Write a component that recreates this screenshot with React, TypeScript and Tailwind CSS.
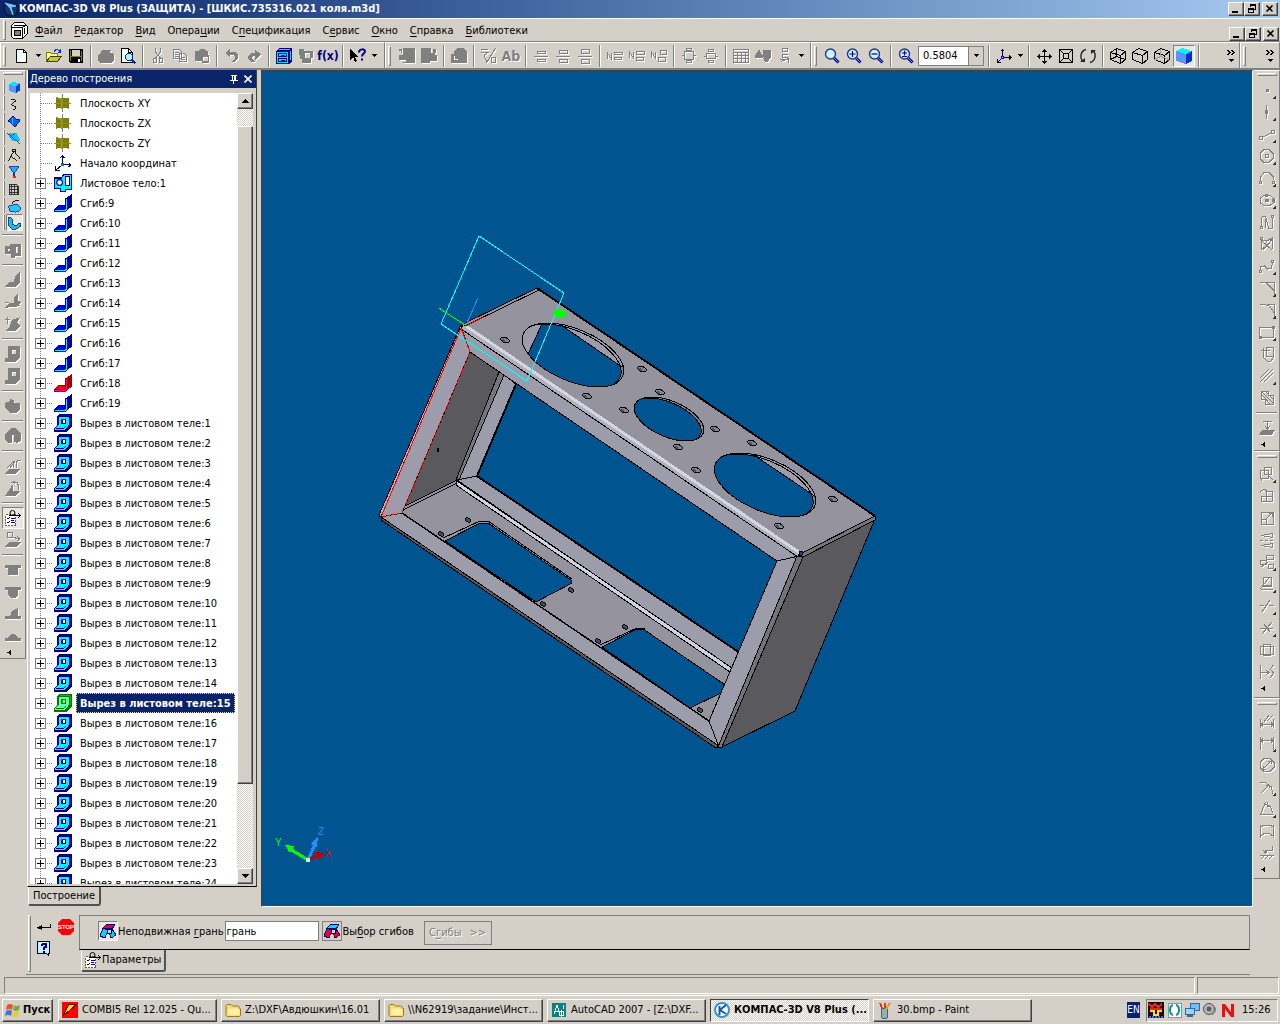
import React, { useState } from 'react';

const RAISED =
  'border border-t-white border-l-white border-r-[#404040] border-b-[#404040] shadow-[inset_-1px_-1px_#808080] bg-[#d4d0c8]';
const CHECKER = 'bg-[repeating-conic-gradient(#ffffff_0_25%,#d4d0c8_0_50%)] bg-[length:2px_2px]';

interface Shape {
  s?: string; // stroked outline
  f?: string; // filled area
}

interface Tool {
  label: string;
  shape?: Shape;
  art?: React.ReactNode;
  more?: boolean;
  pressed?: boolean;
}

type BarItem = Tool | '|' | 'v';

/* ---------- SMALL PARTS ---------- */

// "&" stands before the accelerator letter
function Accel({ text }: { text: string }) {
  const at = text.indexOf('&');
  if (at < 0) return <>{text}</>;
  return (
    <>
      {text.slice(0, at)}
      <span className="underline underline-offset-2">{text[at + 1]}</span>
      {text.slice(at + 2)}
    </>
  );
}

function Glyph({ children, size = 'size-4' }: { children: React.ReactNode; size?: string }) {
  return (
    <svg viewBox="0 0 16 16" className={`${size} shrink-0 overflow-visible`} shapeRendering="crispEdges" fill="none" aria-hidden="true">
      {children}
    </svg>
  );
}

function Etched({ shape, more }: { shape: Shape; more?: boolean }) {
  return (
    <Glyph>
      <g transform="translate(1 1)">
        {shape.f && <path d={shape.f} fill="#fff" />}
        {shape.s && <path d={shape.s} stroke="#fff" />}
      </g>
      {shape.f && <path d={shape.f} fill="#808080" fillRule="evenodd" />}
      {shape.s && <path d={shape.s} stroke="#808080" />}
      {more && <path d="M17 13v4h-4z" fill="#303030" />}
    </Glyph>
  );
}

function ToolButton({ tool }: { tool: Tool }) {
  return (
    <button
      aria-label={tool.label}
      title={tool.label}
      className={`size-[22px] shrink-0 flex items-center justify-center ${
        tool.pressed ? 'border border-t-[#808080] border-l-[#808080] border-r-white border-b-white bg-[#e9e7e3]' : ''
      }`}
    >
      {tool.art ?? <Etched shape={tool.shape!} more={tool.more} />}
    </button>
  );
}

const DownArrow = () => (
  <svg viewBox="0 0 5 3" className="w-[5px] h-[3px]" shapeRendering="crispEdges" aria-hidden="true">
    <path d="M0 0h5v1h-1v1h-1v1h-1v-1h-1v-1h-1z" fill="#000" />
  </svg>
);

const SideArrow = () => (
  <svg viewBox="0 0 4 5" className="w-1 h-[5px]" shapeRendering="crispEdges" aria-hidden="true">
    <path d="M4 0v5l-4-2.500z" fill="#000" />
  </svg>
);

function VSep() {
  return (
    <span className="w-2 shrink-0 flex justify-center">
      <span className="w-[2px] h-[22px] bg-[#808080] border-r border-white" />
    </span>
  );
}

function HSep() {
  return (
    <span className="h-2 shrink-0 flex items-center self-stretch px-[2px]">
      <span className="h-[2px] w-full bg-[#808080] border-b border-white" />
    </span>
  );
}

const VGrip = () => <span className="w-[3px] h-5 shrink-0 border border-l-white border-t-white border-r-[#808080] border-b-[#808080]" />;
const HGrip = () => <span className="w-5 h-[3px] shrink-0 border border-l-white border-t-white border-r-[#808080] border-b-[#808080]" />;

function Bar({ items }: { items: BarItem[] }) {
  return (
    <>
      {items.map((item, i) => {
        if (item === '|') return <VSep key={i} />;
        if (item === 'v')
          return (
            <button key={i} aria-label="Ещё" className="w-[10px] h-[22px] flex items-center justify-center shrink-0">
              <DownArrow />
            </button>
          );
        return <ToolButton key={i} tool={item} />;
      })}
    </>
  );
}

function Column({ items }: { items: BarItem[] }) {
  return (
    <>
      {items.map((item, i) => {
        if (item === '|') return <HSep key={i} />;
        if (item === 'v')
          return (
            <button key={i} aria-label="Ещё" className="h-[11px] w-[22px] pr-2 flex items-center justify-center shrink-0">
              <SideArrow />
            </button>
          );
        return <ToolButton key={i} tool={item} />;
      })}
    </>
  );
}

/* ---------- COLOUR ICONS ---------- */

function Lens({ sign }: { sign?: string }) {
  return (
    <svg viewBox="0 0 16 16" className="size-4" aria-hidden="true">
      <path d="M10 10l4.500 4.500" stroke="#000080" strokeWidth="3" />
      <path d="M10 10l4 4" stroke="#6699ff" />
      <circle cx="6.500" cy="6" r="5" fill="#c8f4ff" stroke="#26338c" strokeWidth="1.400" />
      {sign && <path d={sign} stroke="#000080" strokeWidth="1.200" fill="none" />}
    </svg>
  );
}

const Sheet = (
  <Glyph>
    <path d="M2.500 1.500h7l3 3v10h-10z" fill="#fff" stroke="#000" />
    <path d="M3 2h4v9h-4z" fill="#e0ffff" />
    <path d="M9.500 1.500v3h3" stroke="#000" />
  </Glyph>
);

const OpenFolder = (
  <Glyph>
    <path d="M.5 13.500v-9h4l1 1h6v3" fill="#ffff99" stroke="#808000" />
    <path d="M.5 13.500l4-5.500h11l-4 5.500z" fill="#c8c832" stroke="#404000" />
    <path d="M8 3.500c2-3 4-2 6 0M14.500 1v3h-3" stroke="#0033cc" />
  </Glyph>
);

const Floppy = (
  <Glyph>
    <path d="M1 1h14v14h-13l-1-1z" fill="#000" />
    <path d="M2 2h1v11h-1zM13 3h1v10h-1z" fill="#808000" />
    <path d="M4 2h8v6h-8z" fill="#d4d0c8" />
    <path d="M3 8h10v1h-10z" fill="#808000" />
    <path d="M10 11h2v3h-2z" fill="#fff" />
  </Glyph>
);

const Preview = (
  <Glyph>
    <path d="M1.500.5h7l4 4v10h-11z" fill="#fff" stroke="#000" />
    <path d="M8.500.5v4h4" stroke="#000" />
    <circle cx="9" cy="9" r="3.500" fill="#b0f0ff" stroke="#003399" />
    <path d="M11.500 11.500l4 4" stroke="#003399" strokeWidth="2" />
  </Glyph>
);

const Cabinet = (
  <Glyph>
    <path d="M0 3l3-3h13v13l-3 3h-13z" fill="#000080" />
    <path d="M1 4h11v11h-11z" fill="#00e5ff" />
    <path d="M2.500 5.500h8v3h-8zM2.500 10.500h8v3h-8zM5 7h4M5 12h4" stroke="#000080" />
    <path d="M3 2l1-1h10M14 3v9" stroke="#00e5ff" />
  </Glyph>
);

const HelpArrow = (
  <Glyph>
    <path d="M0 1v11l3-3 2 5 2-1-2-4h4z" fill="#000" />
    <path d="M9 4.500c0-4 6-4 6-1 0 2-3 2-3 5M12 10.500v2" stroke="#000080" strokeWidth="2" shapeRendering="auto" />
  </Glyph>
);

const Cube = ({ back }: { back?: string }) => (
  <Glyph>
    <path d="M.5 4.500l6-4 9 3v8l-5 4-10-4z" stroke="#000" />
    <path d="M.5 4.500l10 3 5-4M10.500 7.500v8" stroke="#000" />
    {back && <path d="M6.500.5v8l-6 3M6.500 8.500l9 3" stroke={back} />}
  </Glyph>
);

const SolidCube = (
  <Glyph>
    <path d="M0 3l6-3 10 3-6 3z" fill="#00f4ff" />
    <path d="M0 3l10 3v10l-10-3z" fill="#5c93ff" />
    <path d="M10 6l6-3v10l-6 3z" fill="#0033cc" />
  </Glyph>
);

const Move = (
  <Glyph>
    <path d="M8.500 1v15M1 8.500h15M6 3.500h5M6 13.500h5M3.500 6v5M13.500 6v5" stroke="#000" />
    <path d="M7 2h3v1h-3zM7 14h3v1h-3zM2 7h1v3h-1zM14 7h1v3h-1z" fill="#000" />
  </Glyph>
);

const Fit = (
  <Glyph>
    <path d="M1.500 1.500h13v13h-13zM5.500 5.500h5v5h-5zM2 2l3 3M14 2l-3 3M2 14l3-3M14 14l-3-3" stroke="#000" />
  </Glyph>
);

const Rotate = (
  <svg viewBox="0 0 16 16" className="size-4 overflow-visible" fill="none" aria-hidden="true">
    <path d="M6 1.500c-5 1-7 8-3 12M10 14.500c5-1 7-8 3-12" stroke="#222" strokeWidth="1.400" />
    <path d="M0 14h5v-4zM16 2h-5v4z" fill="#222" />
  </svg>
);

const Axes = (
  <Glyph>
    <path d="M6.500 9v-8M4.500 3.500l2-2 2 2M7 9.500h8M13 7.500l2 2-2 2M6 10l-4 4M1.500 11v3.500h3" stroke="#000" />
    <path d="M5.500 8.500h2v2h-2z" fill="#fff" stroke="#0000ff" />
  </Glyph>
);

const ParamIcon = ({ size }: { size?: string }) => (
  <Glyph size={size}>
    <path d="M.5 4.500h10v11h-10z" fill="#fff" stroke="#606060" strokeDasharray="2 1" />
    <circle cx="7.500" cy="3" r="2.500" stroke="#000" shapeRendering="auto" />
    <path d="M4 5.500h12M13 3l2.500 2.500-2.500 2.500" stroke="#000" />
    <path d="M2 8l1 1 2-2M2 12l1 1 2-2" stroke="#000" />
    <path d="M6 8.500h4M6 10.500h3M6 12.500h4" stroke="#0000a0" />
  </Glyph>
);

const PlaneIcon = (
  <Glyph size="size-[18px]">
    <path d="M2 3l5 1v-1l6 1v9l-5-1-6 1z" fill="#808000" />
    <path d="M7.500 0v16M0 8.500h15" stroke="#808080" />
    <path d="M2 3l5 2v8" stroke="#a0a000" />
  </Glyph>
);

const OriginIcon = (
  <Glyph size="size-[18px]">
    <path d="M7.500 9v-8M5.500 3.500l2-2 2 2M8 9.500h7M13 7.500l2 2-2 2M7 10l-5 4M1.500 11v3.500h3.500" stroke="#000080" />
    <path d="M6 8h3v3h-3z" fill="#008080" />
  </Glyph>
);

const SheetBodyIcon = (
  <Glyph size="size-[18px]">
    <path d="M.5 3.500h6l2-3h7v13h-5v2h-5v-3h-5z" fill="#00f4ff" stroke="#000080" />
    <path d="M10.500 2.500h3v8h-3z" fill="#fff" stroke="#000080" />
    <circle cx="5" cy="7.500" r="2.500" fill="#fff" stroke="#000080" shapeRendering="auto" />
  </Glyph>
);

function BendIcon({ red }: { red?: boolean }) {
  return (
    <Glyph size="size-[18px]">
      <path d="M10 4l6-4v11l-6 5h-10v-2l4-4h6z" fill={red ? '#a00000' : '#000090'} />
      <path d="M4 11h6v2h-8z" fill={red ? '#ff0000' : '#0000ff'} />
      <path d="M1 14.500h9l1-1v-9" stroke={red ? '#ff00a0' : '#00f4ff'} />
    </Glyph>
  );
}

function CutIcon({ green }: { green?: boolean }) {
  const dark = green ? '#007800' : '#000080';
  return (
    <Glyph size="size-[18px]">
      <path d="M3 2l2-2h11v11l-5 5h-11v-3l3-3z" fill={dark} />
      <path d="M4 3h9v7l-3 4h-9v-1l3-3z" fill={green ? '#5cffb0' : '#00f4ff'} />
      <path d="M5 1.500h9M14.500 2v8" stroke={green ? '#00c000' : '#0000d0'} />
      <path d="M2 12.500h7l2-2" stroke={dark} />
      <path d="M6.500 4.500h4v4h-4z" fill={green ? '#a0ff60' : '#fff'} stroke={dark} />
      <path d="M6 5h2v4h-2z" fill={green ? '#00a000' : '#0000a0'} />
    </Glyph>
  );
}

function FaceIcon({ a, b }: { a: string; b: string }) {
  return (
    <Glyph>
      <path d="M3 5l4-4 8 1-3 4z" fill={a} stroke="#000080" />
      <path d="M3 5l-3 8 5 2 3-8z" fill={b} stroke="#000080" />
      <path d="M12 6l4 6-5 3-3-8z" fill={b} stroke="#000080" />
      <path d="M7 6h4v4h-4z" fill="#d4d0c8" stroke="#000080" />
    </Glyph>
  );
}

/* ---------- TOOLBAR DATA ---------- */

const STANDARD: BarItem[] = [
  { label: 'Создать', art: Sheet },
  'v',
  { label: 'Открыть', art: OpenFolder },
  { label: 'Сохранить', art: Floppy },
  '|',
  { label: 'Печать', shape: { f: 'M4 2h9l-1 3h3l1 2v5l-3 3h-11l-2-3v-5l3-2z' } },
  { label: 'Просмотр', art: Preview },
  '|',
  { label: 'Вырезать', shape: { s: 'M5.500 0v4l5 6M10.500 0v4l-5 6M3.500 10.500h3v4h-3zM9.500 10.500h3v4h-3z' } },
  { label: 'Копировать', shape: { s: 'M1.500 1.500h6l2 2v7h-8zM3 4.500h4M3 6.500h4M3 8.500h4M7.500 5.500h5l2 2v6h-7zM9 9.500h4M9 11.500h4' } },
  { label: 'Вставить', shape: { f: 'M1 3h3l2-2h4l2 2h2v4h1v8h-7v-2h-7zM9 9v4h5v-4z' } },
  '|',
  { label: 'Отменить', shape: { f: 'M6 1v3h5l3 3v4l-4 3h-3l4-3v-2l-2-2h-3v3l-5-5z' } },
  { label: 'Повторить', shape: { f: 'M9 2v3h-4l-3 3v3l3 3h4l-3-3v-2l1-1h2v4l6-6z' } },
  '|',
  { label: 'Менеджер библиотек', art: Cabinet },
  { label: 'Переменные', shape: { f: 'M1 1h5v2h9v7h-2v5h-9v-4h-2v-4h-1zM7 5v5h5v-5z' } },
  { label: 'Функции', art: <span className="text-[12px] font-bold text-[#000080]">f(x)</span> },
  '|',
  { label: 'Справка', art: HelpArrow },
  'v',
];

const LAYOUT: BarItem[] = [
  { label: 'Лист назад', shape: { f: 'M4 0h12v15h-12v-1h3v-2h-7v-5h4zM0 1h3v4h-1v-2h-2z' } },
  { label: 'Лист вперёд', shape: { f: 'M0 0h10v5h4v2h2v6h-7v2h-9zM12 1h3v4h-3z' } },
  '|',
  { label: 'Документ', shape: { f: 'M3 3l3-3h6l4 4v11h-16v-9h3zM3 8v4h4v-1h-3v-3z' } },
  '|',
  { label: 'Шероховатость', shape: { s: 'M0 1.500h7M0 4.500h7l-4 3M14.500 0l-9 15M3 8l3 6M10.500 9.500h4v5h-4z' } },
  { label: 'Текст', art: <span className="text-[14px] font-bold text-[#808080] [text-shadow:1px_1px_#fff]">Ab</span> },
  '|',
  { label: 'По центру', shape: { s: 'M4.500 3.500h8v2h-8zM1 8.500h14M4.500 11.500h8v2h-8z' } },
  { label: 'Интервал', shape: { s: 'M4.500 2.500h8v3h-8zM1 8.500h14M4.500 11.500h8v3h-8z' } },
  { label: 'Разрядка', shape: { s: 'M4.500 1.500h8v4h-8zM1 8.500h14M4.500 11.500h8v4h-8z' } },
  '|',
  { label: 'Номер 1', shape: { s: 'M.5 11v-6l4 6v-6M7.500 4.500h8v2h-8zM7.500 9.500h7v2h-7z' } },
  { label: 'Номер 2', shape: { s: 'M.5 10v-6l4 6v-6M7.500 3.500h8v3h-8zM7.500 9.500h7v3h-7z' } },
  { label: 'Номер 3', shape: { s: 'M.5 10v-6l4 6v-6M9.500 2.500h6v4h-6zM7.500 9.500h7v4h-7z' } },
  '|',
  { label: 'Строка выше', shape: { s: 'M5.500.5h5v2h-5zM3.500 3.500h9v8h-9zM1 7.500h2M13 7.500h2M5.500 12.500h5v2h-5z' } },
  { label: 'Строка ниже', shape: { s: 'M5.500 1.500h5v2h-5zM3.500 5.500h9v5h-9zM1 8.500h2M13 8.500h2M5.500 12.500h5v2h-5z' } },
  '|',
  { label: 'Таблица', shape: { s: 'M.5 1.500h15v13h-15zM0 4.500h16M0 7.500h16M0 10.500h16M4.500 4v11M8.500 4v11M12.500 4v11' } },
  { label: 'Фигуры', shape: { f: 'M4 1l5 9h-9v-2zM8 2h8v7l-3 5h-3l-2-4z' } },
  { label: 'Надпись', shape: { s: 'M5.500.5h5v3h-5zM5 6.500h6M5.500 6v3h5M4 13.500l7-3v4M3 11.500h8' } },
  'v',
];

const VIEW_A: BarItem[] = [
  { label: 'Увеличить рамкой', art: <Lens /> },
  { label: 'Увеличить', art: <Lens sign="M3.500 6h6M6.500 3v6" /> },
  { label: 'Уменьшить', art: <Lens sign="M3.500 6h6" /> },
  '|',
  { label: 'Масштаб', art: <Lens sign="M4 5h5M6.500 2.500v5M4 8.500h5" /> },
];

const VIEW_B: BarItem[] = [
  '|',
  { label: 'Ориентация', art: Axes },
  'v',
  '|',
  { label: 'Сдвинуть', art: Move },
  { label: 'Показать всё', art: Fit },
  { label: 'Повернуть', art: Rotate },
  '|',
  { label: 'Каркас', art: <Cube back="#000" /> },
  { label: 'Без невидимых линий', art: <Cube /> },
  { label: 'Невидимые линии тонкие', art: <Cube back="#a0a0a0" /> },
  { label: 'Полутоновое', art: SolidCube, pressed: true },
  '|',
];

const PANELS: { label: string; art: React.ReactNode }[] = [
  { label: 'Редактирование детали', art: <g><path d="M2 5l5-3 8 2-4 3z" fill="#00e5ff" /><path d="M2 5l8 2v8l-8-3z" fill="#5c93ff" /><path d="M10 7l5-3v8l-5 3z" fill="#0044dd" /></g> },
  { label: 'Пространственные кривые', art: <path d="M4 2.500h4l2 2-5 4 5 3v2l-3 1" stroke="#000" /> },
  { label: 'Поверхности', art: <g><path d="M1 8l6-6 3 4 5 1-6 8-3-4z" fill="#0066ee" stroke="#000080" /><path d="M6 4v7" stroke="#40d0ff" /></g> },
  { label: 'Вспомогательная геометрия', art: <g><path d="M1 3l10-1 4 9-9 1z" fill="#00c8ff" /><path d="M0 2l15 13M3 8l6-5" stroke="#003399" /></g> },
  { label: 'Измерения', art: <path d="M8 3.500l-6.500 11M8 3.500l7 9M5 9.500l6 5M6.500 1.500h3v3h-3z" stroke="#000" /> },
  { label: 'Фильтры', art: <g><path d="M2 2h12l-5 6v4h-2v-4z" fill="#22aaff" stroke="#0033aa" /><path d="M7 12h3v3h-3z" fill="#e03010" /></g> },
  { label: 'Спецификация', art: <path d="M2.500 2.500h8l3 3v9h-11zM2 5.500h11M2 8.500h12M2 11.500h12M5.500 2v12M8.500 2v12M11.500 4v10" stroke="#222" /> },
  { label: 'Отчёты', art: <g><path d="M2 8l9-2 4 3v4l-5 2-7-1z" fill="#22c8ff" stroke="#003399" /><path d="M6 6c0-4 4-4 8-4" stroke="#000" /></g> },
  { label: 'Листовое тело', art: <path d="M2 1l4 2v6l4 2 5-3v4l-5 3h-4l-4-4z" fill="#22b8e8" stroke="#003366" /> },
];

const LEFT_TOOLS: BarItem[] = [
  '|',
  { label: 'Листовое тело', shape: { f: 'M0 4h5v-2h11v12h-6v2h-4v-4h-6zM11 5v6h2v-6zM3 7v2h2v-2z' } },
  '|',
  { label: 'Сгиб', shape: { f: 'M10 4l5-4v10l-5 5h-10l4-5h5z' } },
  { label: 'Сгиб по линии', shape: { f: 'M9 3l4-3v7l3 1-5 5h-5l-6 1 4-5h5z', s: 'M0 8l15 4' } },
  { label: 'Подсечка', shape: { f: 'M7 4l8-3-3 6 3 3-4 5h-11l5-5z', s: 'M2.500 1v7M0 3.500h5' } },
  '|',
  { label: 'Отверстие', shape: { f: 'M3 0h12v11l-4 5h-11v-4h3zM7 4v4h4v-4z' } },
  { label: 'Вырез', shape: { f: 'M3 0h12v11l-4 5h-11v-4h3zM7 4v4h4v-4z' } },
  '|',
  { label: 'Замыкание углов', shape: { f: 'M5 1l4 1v3h6v6l-4 4h-6l-5-5v-5l5-2z' } },
  '|',
  { label: 'Развёртка', shape: { f: 'M6 0h4l6 6v7l-4 2-3-1v-7h-2v8h-4l-3-3v-6z' } },
  '|',
  { label: 'Разогнуть', shape: { f: 'M4 11h11l-4 5h-11z', s: 'M2 10l7-7M5 10l5-7M8.500 10v-7M11.500 10v-6l2-2h2' } },
  { label: 'Согнуть', shape: { f: 'M8 4v7h7l-4 5h-11z', s: 'M6 2.500h6l1 2v5M10 1l-2 1 2 2' } },
  '|',
  { label: 'Параметры', art: <ParamIcon />, pressed: true },
  { label: 'Параметры сгиба', shape: { f: 'M4 10h12l-4 5h-12z', s: 'M2.500.5h5v5h-5zM6 5l9 2M12 4l3 3-3 2' } },
  '|',
  { label: 'Закрытая штамповка', shape: { f: 'M0 3h16v3h-3v7h-10v-7h-3z' } },
  { label: 'Открытая штамповка', shape: { f: 'M0 3h16v3h-3v5l-3 3h-4l-3-3v-5h-3z' } },
  { label: 'Жалюзи', shape: { f: 'M0 10h5l2-5 6-3v8h3v3h-16z' } },
  { label: 'Буртик', shape: { f: 'M0 10h2l5-4h2l5 4h2v3h-16z' } },
  'v',
];

const GEOMETRY: BarItem[] = [
  { label: 'Точка', shape: { f: 'M7 7h3v3h-3z' }, more: true },
  { label: 'Вспомогательная прямая', shape: { s: 'M7.500 1v14M6.500 6.500h2v3h-2z' }, more: true },
  { label: 'Отрезок', shape: { s: 'M.5 10.500h3v3h-3zM4 11l8-4M12.500 4.500h3v3h-3z' }, more: true },
  { label: 'Окружность', shape: { s: 'M5 1.500h5l4 4v5l-4 4h-5l-4-4v-5zM6.500 6.500h3v3h-3z' }, more: true },
  { label: 'Дуга', shape: { s: 'M1.500 12v-5l4-5h4l5 5v3M.5 11.500h2v2h-2zM13.500 11.500h2v2h-2z' }, more: true },
  { label: 'Эллипс', shape: { s: 'M5 3.500h6l4 3v4l-4 3h-6l-4-3v-4z', f: 'M6 7h4v3h-4zM6 2h3v3h-3zM13 7h3v3h-3z' }, more: true },
  { label: 'Непрерывный ввод', shape: { s: 'M2.500 3v9M2.500 2h4l3 12h4v-11M1.500 12.500h2v2h-2zM6.500 5v9M12.500 1.500h2v2h-2z' } },
  { label: 'Линия', shape: { s: 'M2.500 4v9l6-3 5-8-6 3zM3 5l10 9M13.500 3v10M1.500 1.500h2v2h-2zM4 14l9-10' } },
  { label: 'Кривая Безье', shape: { s: 'M1.500 13v-4l4-1 3 3 4-1 1-6M.5 12.500h2v2h-2zM12.500 2.500h2v2h-2z' }, more: true },
  { label: 'Фаска', shape: { s: 'M1 2.500h6l8 8v5M8 2.500h7v7' }, more: true },
  { label: 'Скругление', shape: { s: 'M1 2.500h5l5 2 4 6v5M8 2.500h7v7' }, more: true },
  { label: 'Прямоугольник', shape: { s: 'M.5 3.500h14v10h-14zM13.500 2.500h2v2h-2zM0 12.500h2v2h-2z' }, more: true },
  { label: 'Собрать контур', shape: { s: 'M2 4.500h9M4.500 2v5M7.500 1.500h7v9h-7zM4 7v4l4 4h4l3-4' } },
  { label: 'Штриховка линией', shape: { s: 'M1 10l9-9M1 14l13-13M5 14l9-9' }, more: true },
  { label: 'Штриховка', shape: { s: 'M2.500 1.500h7v4h5v9h-8v-5h-4zM3 5l6 6M3 2l11 11M7 2l7 7M7 10l4 4' } },
  '|',
  { label: 'Спроецировать', shape: { f: 'M3 10h13l-3 5h-13z', s: 'M4 1.500h9M8.500 2v7M6 6l2.500 3 2.500-3' } },
  'v',
];

const EDITING: BarItem[] = [
  { label: 'Сдвиг', shape: { s: 'M1.500 4.500h8v8h-8zM5.500 1.500h7v7h-7zM8 8l6 6M.5 12.500h2v2' }, more: true },
  { label: 'Поворот', shape: { s: 'M7.500 3.500h6v10h-6zM2.500 8.500h11v5h-11zM1 5c1-4 5-4 7-2' } },
  { label: 'Масштабирование', shape: { s: 'M2.500 2.500h12v12h-12zM2.500 9.500h5v5M7 9l6-6M10 3.500h3v3' } },
  { label: 'Симметрия', shape: { s: 'M13.500 1.500v4l-11-2zM1 8.500h3M6 8.500h3M11 8.500h3M13.500 11.500v4l-11-2z' } },
  { label: 'Копирование', shape: { s: 'M7.500 1.500h7v4h-7zM1.500 6.500h6v4h-6zM9.500 10.500h5v4h-5zM2 13l7-5' }, more: true },
  { label: 'Деформация', shape: { s: 'M4.500 1.500h8v8h-8zM1.500 13.500h12M1.500 13l8-11M4 10h9' }, more: true },
  { label: 'Усечь кривую', shape: { s: 'M1 7.500h4M6 7.500h2M10 7.500h5M3 14l8-12' }, more: true },
  { label: 'Разбить кривую', shape: { s: 'M1 8.500h13M3 14l10-12M5 4l6 8' }, more: true },
  { label: 'Очистить область', shape: { s: 'M1.500 4.500h13v8h-13zM4.500 2.500h7v11h-7z' } },
  { label: 'Преобразовать', shape: { s: 'M1.500 1v14M2 8.500h8M7 6l3 2.500-3 2.500M14.500 1l-3 4 3 4-3 5' } },
  'v',
];

const DIMENSIONS: BarItem[] = [
  { label: 'Авторазмер', shape: { s: 'M1.500 6v9M14.500 6v9M2 11.500h12M5 9l5-7M8 8l6-6M4 9.500l-2 2 2 2M12 9.500l2 2-2 2' } },
  { label: 'Линейный размер', shape: { s: 'M1.500 2v13M14.500 2v13M2 5.500h12M4 3.500l-2 2 2 2M12 3.500l2 2-2 2' }, more: true },
  { label: 'Диаметральный размер', shape: { s: 'M5 1.500h6l4 4v5l-4 4h-6l-4-4v-5zM4 12l8-8M9 4h3v3M4 9v3h3' } },
  { label: 'Радиальный размер', shape: { s: 'M1 3.500h5l6 4 2 7M2 14l8-8M7 6h3v3' }, more: true },
  { label: 'Угловой размер', shape: { s: 'M6.500 1l-5 12.500h13M6 3l5 2 3 7M8 1v4h3' }, more: true },
  { label: 'Размер дуги', shape: { s: 'M1.500 2v13M14.500 2v13M2 4l3-2h6l3 2M2 13l4-3h4l4 3' } },
  { label: 'Размер высоты', shape: { s: 'M6.500 8v-3h7v-4M4 5l2.500 3 2.500-3M1 10.500h14M2 14l3-3M6 14l3-3M10 14l3-3' } },
  'v',
];

/* ---------- TREE ---------- */

interface TreeItem {
  label: string;
  kind: 'plane' | 'origin' | 'body' | 'bend' | 'cut';
}

const TREE: TreeItem[] = [
  { label: 'Плоскость XY', kind: 'plane' },
  { label: 'Плоскость ZX', kind: 'plane' },
  { label: 'Плоскость ZY', kind: 'plane' },
  { label: 'Начало координат', kind: 'origin' },
  { label: 'Листовое тело:1', kind: 'body' },
  ...Array.from({ length: 11 }, (_, i): TreeItem => ({ label: `Сгиб:${i + 9}`, kind: 'bend' })),
  ...Array.from({ length: 24 }, (_, i): TreeItem => ({ label: `Вырез в листовом теле:${i + 1}`, kind: 'cut' })),
];

function TreeRow({ item, selected, onSelect }: { item: TreeItem; selected: boolean; onSelect: () => void }) {
  const expandable = item.kind !== 'plane' && item.kind !== 'origin';
  return (
    <li className="h-5 flex items-center">
      <svg viewBox="0 0 24 20" className="w-6 h-5 shrink-0" shapeRendering="crispEdges" fill="none" aria-hidden="true">
        <path d="M10.500 0v20M11 10.500h12" stroke="#808080" strokeDasharray="1 1" />
        {expandable && (
          <>
            <path d="M5.500 5.500h10v10h-10z" fill="#fff" stroke="#808080" />
            <path d="M7 10.500h7M10.500 7v7" stroke="#000" />
          </>
        )}
      </svg>
      {item.kind === 'plane' && PlaneIcon}
      {item.kind === 'origin' && OriginIcon}
      {item.kind === 'body' && SheetBodyIcon}
      {item.kind === 'bend' && <BendIcon red={item.label === 'Сгиб:18'} />}
      {item.kind === 'cut' && <CutIcon green={selected} />}
      <button
        onClick={onSelect}
        className={`ml-1 h-5 px-[3px] pt-[2px] whitespace-nowrap border text-left ${
          selected ? 'bg-[#0a246a] text-white font-bold border-dotted border-[#f5db95]' : 'border-transparent'
        }`}
      >
        {item.label}
      </button>
    </li>
  );
}

function BuildTree() {
  const [selected, setSelected] = useState('Вырез в листовом теле:15');
  return (
    <section className="w-[235px] shrink-0 flex flex-col pl-px">
      <div className="flex-1 min-h-0 flex flex-col border-l border-l-white border-r border-r-[#404040] border-b border-b-black mr-[4px]">
        <header className="h-[18px] shrink-0 bg-[#0a246a] text-white flex items-center pl-[2px] pr-px">
          <h2 className="flex-1">Дерево построения</h2>
          <button aria-label="Закрепить" className="size-[14px] flex items-center justify-center">
            <svg viewBox="0 0 8 9" className="w-2 h-[9px]" shapeRendering="crispEdges" fill="none">
              <path d="M1 .5h6M2.500 0v5M5.500 0v5M4.500 0v5M0 5.500h8M3.500 5v4" stroke="#fff" />
            </svg>
          </button>
          <button aria-label="Закрыть дерево" className="size-[14px] flex items-center justify-center">
            <svg viewBox="0 0 8 8" className="size-2" fill="none">
              <path d="M.5.5l7 7M7.500.5l-7 7" stroke="#fff" strokeWidth="1.600" />
            </svg>
          </button>
        </header>
        <div className="flex-1 min-h-0 flex pt-[5px] pb-[2px] pl-[2px] pr-[3px]">
          <ul className="flex-1 min-w-0 bg-white overflow-hidden">
            {TREE.map(item => (
              <TreeRow key={item.label} item={item} selected={item.label === selected} onSelect={() => setSelected(item.label)} />
            ))}
          </ul>
          <div className={`w-4 shrink-0 flex flex-col ${CHECKER}`}>
            <button aria-label="Вверх" className={`h-4 shrink-0 flex items-center justify-center ${RAISED}`}>
              <svg viewBox="0 0 7 4" className="w-[7px] h-1" shapeRendering="crispEdges"><path d="M3 0h1l3 4h-7z" /></svg>
            </button>
            <div className="flex-[17]" />
            <div className={`flex-[659] ${RAISED}`} />
            <div className="flex-[84]" />
            <button aria-label="Вниз" className={`h-4 shrink-0 flex items-center justify-center ${RAISED}`}>
              <svg viewBox="0 0 7 4" className="w-[7px] h-1" shapeRendering="crispEdges"><path d="M3 4h1l3-4h-7z" /></svg>
            </button>
          </div>
        </div>
      </div>
      <div className="h-5 shrink-0 pl-px">
        <button className="h-[19px] px-1 border-l border-l-white border-r-2 border-r-[#505050] border-b-2 border-b-[#505050] rounded-b-[3px]">
          Построение
        </button>
      </div>
    </section>
  );
}

/* ---------- MODEL VIEW ---------- */

const PLATE_HOLES = [
  [505, 340], [587, 396], [624, 410], [642, 369], [660, 392], [715, 429],
  [752, 443], [678, 447], [696, 470], [833, 499], [779, 526],
];
const FLOOR_HOLES = [[468, 520], [441, 534], [571, 590], [543, 604], [598, 641], [625, 627], [700, 710]];
const BIG_HOLES = [
  { id: 'hole-a', x: 573, y: 355, rx: 54, ry: 26, inside: 'M561 325L622 367L640 350L580 300z M542 324L528 354L510 350L520 310z' },
  { id: 'hole-b', x: 669, y: 419, rx: 37, ry: 18, inside: '' },
  { id: 'hole-c', x: 765, y: 485, rx: 54, ry: 26, inside: 'M754 455L816 497L830 480L780 440z' },
];

function ModelView() {
  return (
    <svg viewBox="262 71 990 835" className="w-full h-full" shapeRendering="crispEdges" role="img" aria-label="Модель детали">
      <g stroke="#000" strokeWidth="1" strokeLinejoin="round">
        {/* floor */}
        <path d="M402 513L403 507L457 479L734 672L709 721z" fill="#95949e" />

        {/* back-left wall */}
        <path d="M469 351L502 373L457 480L403 507z" fill="#5a595e" />
        <path d="M499 372L504 375L460 480L456 480z" fill="#77767e" />
        <path d="M504 375L516 384L477 476L459 480z" fill="#9d9caa" />
        <path d="M516 384L477 476" strokeWidth="2" />
        <ellipse cx="438" cy="450" rx="1" ry="2" fill="#77767e" />
        <path d="M403 510L457 483" />

        <path d="M457 480L477 476L740 653L732 669z" fill="#9d9caa" />
        <path d="M477 476L740 653" strokeWidth="2" />
        <path d="M457 481L732 668L730 672L456 485z" fill="#d2d1df" />
        <path d="M445 541L480 523L488 523L571 580L572 583L536 602z" fill="#005490" />
        <path d="M443 538L480 521L488 521L572 579" fill="none" />
        <path d="M602 647L637 629L643 629L724 684L723 692L690 708z" fill="#005490" />
        <path d="M600 645L637 628L645 629" fill="none" />
        {FLOOR_HOLES.map(([x, y]) => (
          <ellipse key={x} cx={x} cy={y} rx="3" ry="2" transform={`rotate(22 ${x} ${y})`} fill="#3f4f66" />
        ))}

        {/* front frame */}
        <path d="M381 517L402 513L709 721L719 746z" fill="#9d9caa" />
        <path d="M381 517L719 746L716 748L381 520z" fill="#5a595e" />
        <path d="M402 513L709 721" strokeWidth="1.500" />
        <path d="M461 325L379 515L381 518L462 328z" fill="#b4b3c0" />
        <path d="M461 328L470 352L402 513L381 517z" fill="#9d9caa" />
        <path d="M798 556L777 561L709 721L719 747z" fill="#9d9caa" />
        <path d="M797 556L804 557L723 747L718 747z" fill="#74737a" />

        {/* right side */}
        <path d="M803 557L875 519L795 711L722 747z" fill="#5a595e" />

        {/* top plate */}
        <path d="M463 324L537 288L875 516L800 554z" fill="#95949e" />
        <path d="M465 326L539 290" />
        <path d="M537 288L875 516" strokeWidth="2" />
        <path d="M800 554L875 516L875 520L803 557z" fill="#77767e" />
        <path d="M461 327L470 352L777 561L799 556z" fill="#9d9caa" />
        <path d="M463 324L800 552L798 557L461 329z" fill="#b0afbc" />
        <path d="M466 326L800 553" stroke="#d6d5e4" strokeWidth="3" />
        <path d="M799 551h3v4h-3z" fill="#005490" />
      </g>

      {BIG_HOLES.map(h => (
        <g key={h.id}>
          <clipPath id={h.id}>
            <ellipse cx={h.x} cy={h.y} rx={h.rx} ry={h.ry} transform={`rotate(23 ${h.x} ${h.y})`} />
          </clipPath>
          <g clipPath={`url(#${h.id})`} stroke="#000">
            <ellipse cx={h.x} cy={h.y} rx={h.rx} ry={h.ry} transform={`rotate(23 ${h.x} ${h.y})`} fill="#85848e" />
            <ellipse cx={h.x - 2} cy={h.y + 2} rx={h.rx} ry={h.ry} transform={`rotate(23 ${h.x} ${h.y})`} fill="#005490" />
            {h.inside && <path d={h.inside} fill="#9d9caa" />}
            <ellipse cx={h.x - 2} cy={h.y + 2} rx={h.rx} ry={h.ry} transform={`rotate(23 ${h.x} ${h.y})`} fill="none" />
          </g>
          <ellipse cx={h.x} cy={h.y} rx={h.rx} ry={h.ry} transform={`rotate(23 ${h.x} ${h.y})`} fill="none" stroke="#000" />
        </g>
      ))}
      {PLATE_HOLES.map(([x, y]) => (
        <g key={x} transform={`rotate(22 ${x} ${y})`} stroke="#000">
          <ellipse cx={x} cy={y} rx="4.500" ry="2.500" fill="#85848e" />
          <ellipse cx={x - 1} cy={y + 1} rx="2" ry="1" fill="#33557a" stroke="none" />
        </g>
      ))}

      {/* highlighted face and sketch plane */}
      <path d="M461 328L470 352L402 513L381 517z" fill="none" stroke="#f00" />
      <path d="M470 352L402 513L381 517" fill="none" stroke="#000" strokeDasharray="2 3" />
      <path d="M479 236L564 293L527 381L441 324z" fill="none" stroke="#00ffff" />
      <path d="M439 308L465 325" stroke="#00ff00" />
      <path d="M478 298L466 325" stroke="#1e90ff" />
      <path d="M484 317L466 326" stroke="#f00" />
      <path d="M554 310l4-1 5 1 3 3-1 4-8 1-3-3z" fill="#00ff00" />

      {/* orientation triad */}
      <path d="M308 860L290 849" stroke="#00ff00" strokeWidth="3" />
      <path d="M285 845l9 1-4 7z" fill="#00ff00" />
      <path d="M308 860L315 844" stroke="#1e90ff" strokeWidth="3" />
      <path d="M318 836l-7 8 6 3z" fill="#1e90ff" />
      <path d="M308 860L319 855" stroke="#c00000" strokeWidth="3" />
      <path d="M325 853l-10-1 4 8z" fill="#c00000" />
      <path d="M306 858h4v4h-4z" fill="#c0ffc0" />
      <g fontSize="10" fontFamily="Liberation Sans, sans-serif">
        <text x="275" y="846" fill="#00ff00">Y</text>
        <text x="318" y="835" fill="#1e90ff">Z</text>
        <text x="325" y="857" fill="#f00000">X</text>
      </g>
    </svg>
  );
}

/* ---------- WINDOW CONTROLS, TASKS ---------- */

function WindowButtons() {
  const box = `w-4 h-[14px] flex items-center justify-center ${RAISED}`;
  return (
    <div className="flex">
      <button aria-label="Свернуть" className={box}>
        <svg viewBox="0 0 10 10" className="size-[10px]" shapeRendering="crispEdges"><path d="M1 7h6v2h-6z" /></svg>
      </button>
      <button aria-label="Восстановить" className={box}>
        <svg viewBox="0 0 10 10" className="size-[10px]" shapeRendering="crispEdges" fill="none">
          <path d="M3.500 3v-2.500h5v5h-2M3 1.500h6M1.500 4.500h5v4h-5zM1 5.500h6" stroke="#000" />
        </svg>
      </button>
      <button aria-label="Закрыть" className={`${box} ml-[2px]`}>
        <svg viewBox="0 0 10 10" className="size-[10px]" fill="none">
          <path d="M1.500 1.500l6 6M7.500 1.500l-6 6" stroke="#000" strokeWidth="1.600" />
        </svg>
      </button>
    </div>
  );
}

const Compass = ({ dark }: { dark?: boolean }) => (
  <svg viewBox="0 0 16 16" className="size-4 shrink-0" fill="none" aria-hidden="true">
    <circle cx="8" cy="8" r="7" fill={dark ? '#14346e' : '#fff'} stroke={dark ? '#0c1c3c' : '#3a90d8'} strokeWidth="2" />
    {dark ? (
      <path d="M2 2l11 3-5 1 2 8-3-7z" fill="#6cc8ff" stroke="#6cc8ff" />
    ) : (
      <path d="M5.500 4v9M12 3l-6 5 6 4" stroke="#1a5a9a" strokeWidth="2" />
    )}
  </svg>
);

const FolderIcon = (
  <svg viewBox="0 0 16 16" className="size-4 shrink-0" aria-hidden="true">
    <path d="M1 3.500l1-1h4l1.500 1.500h6l.5.500v2h1.500v7l-1 1h-12.500l-1-1z" fill="#f7d774" stroke="#a07818" />
    <path d="M3.500 6.500h11v6.500h-11z" fill="#fff0a8" />
  </svg>
);

const TASKS = [
  {
    label: 'COMBI5 Rel 12.025 - Qu...',
    icon: <Glyph><path d="M0 0h16v16h-16z" fill="#f00" /><path d="M1 14l6-12h8z" fill="#ffe600" stroke="#600" /></Glyph>,
  },
  { label: 'Z:\\DXF\\Авдюшкин\\16.01', icon: FolderIcon },
  { label: '\\\\N62919\\задание\\Инст...', icon: FolderIcon },
  {
    label: 'AutoCAD 2007 - [Z:\\DXF...',
    icon: (
      <Glyph>
        <path d="M1 1h14v14h-14z" fill="#0a8080" />
        <path d="M3 12l3-9 3 9M4 9.500h4M8.500 9.500h4v4h-4zM10.500 8v7M12 3v4" stroke="#fff" />
      </Glyph>
    ),
  },
  { label: 'КОМПАС-3D V8 Plus (...', icon: <Compass />, active: true },
  {
    label: '30.bmp - Paint',
    icon: (
      <Glyph>
        <path d="M4 6h7l-1 10h-5z" fill="#90b0b8" stroke="#506068" />
        <path d="M5 6l-2-5M8 6v-5" stroke="#d04010" strokeWidth="2" />
        <path d="M9 7l4-6" stroke="#e0a010" strokeWidth="2" />
      </Glyph>
    ),
  },
];

function Taskbar() {
  return (
    <footer className="h-[29px] shrink-0 border-t border-white flex items-center pl-[2px] pr-[2px] gap-1">
      <button className={`w-[51px] h-[23px] shrink-0 flex items-center gap-[2px] px-[2px] font-bold ${RAISED}`}>
        <svg viewBox="0 0 16 16" className="size-4 shrink-0" aria-hidden="true">
          <path d="M2 3q3-2 6 0l-1 5q-3-2-6 0z" fill="#e8502a" />
          <path d="M9 3q3 2 6 0l-1 5q-3 2-6 0z" fill="#6cb33e" />
          <path d="M1 9q3-2 6 0l-1 5q-3-2-6 0z" fill="#3c78d8" />
          <path d="M8 9q3 2 6 0l-1 5q-3 2-6 0z" fill="#f8c820" />
        </svg>
        Пуск
      </button>
      <nav className="flex-1 min-w-0 flex gap-1 pl-px">
        {TASKS.map(task => (
          <button
            key={task.label}
            className={`w-[159px] min-w-0 h-[23px] flex items-center gap-1 pl-[3px] whitespace-nowrap overflow-hidden ${
              task.active ? `font-bold border border-t-[#404040] border-l-[#404040] border-r-white border-b-white ${CHECKER}` : RAISED
            }`}
          >
            {task.icon}
            <span>{task.label}</span>
          </button>
        ))}
      </nav>
      <span className="w-[13px] h-4 bg-[#0a246a] text-white text-[10px] flex items-center justify-center shrink-0">EN</span>
      <div className="h-[23px] w-[132px] shrink-0 ml-[2px] px-px flex items-center gap-[2px] border border-t-[#808080] border-l-[#808080] border-r-white border-b-white">
        <Glyph>
          <path d="M0 0h16v16h-16z" fill="#200808" />
          <path d="M1 2l3 3 3-3 3 3 4-3M2 7h12" stroke="#f02020" strokeWidth="2" />
          <path d="M2 9h4v4h4v-4h4" stroke="#ffe020" strokeWidth="2" />
          <path d="M1 15h14" stroke="#4060ff" strokeWidth="2" strokeDasharray="2 1" />
        </Glyph>
        <Glyph>
          <path d="M2 1h13v14h-13z" fill="#fff" stroke="#60a8a8" />
          <path d="M7 3c-4 1-4 9 0 10M10 3c4 1 4 9 0 10" stroke="#109090" strokeWidth="2" shapeRendering="auto" />
        </Glyph>
        <Glyph>
          <path d="M6 1h9v7h-9z" fill="#6cc0ff" stroke="#4060a0" />
          <path d="M1 6h9v6h-9z" fill="#90d8ff" stroke="#4060a0" />
          <path d="M3 14h6" stroke="#506080" strokeWidth="2" />
        </Glyph>
        <svg viewBox="0 0 16 16" className="size-4 shrink-0" fill="none" aria-hidden="true">
          <circle cx="7" cy="7" r="5.500" fill="#b8b8b8" stroke="#505050" />
          <circle cx="7" cy="7" r="2.500" fill="#606060" />
          <path d="M13 5q2 5-3 8" stroke="#808080" />
        </svg>
        <svg viewBox="0 0 16 16" className="size-4 shrink-0" aria-hidden="true">
          <path d="M2 15v-13h3l6 8v-8h3v13h-3l-6-8v8z" fill="#e81010" />
        </svg>
        <time className="ml-1">15:26</time>
      </div>
    </footer>
  );
}

const MENU = ['&Файл', '&Редактор', '&Вид', 'Опера&ции', 'С&пецификация', 'С&ервис', '&Окно', '&Справка', '&Библиотеки'];

const Chevrons = () => (
  <button aria-label="Ещё кнопки" className="w-4 shrink-0 flex flex-col items-center gap-1">
    <svg viewBox="0 0 8 5" className="w-2 h-[5px]" shapeRendering="crispEdges" fill="none">
      <path d="M.5 0l2.500 2.500-2.500 2.500M4.500 0l2.500 2.500-2.500 2.500" stroke="#000" strokeWidth="1.500" />
    </svg>
    <DownArrow />
  </button>
);

export default function App() {
  const [scale, setScale] = useState('0.5804');
  const [face, setFace] = useState('грань');
  const band = 'h-[26px] flex items-center border-t border-t-white border-l border-l-white border-r border-r-[#808080]';
  const dock = 'flex flex-col items-center border-t border-t-white border-b border-b-[#808080] border-r border-r-[#808080]';

  return (
    <div className="h-screen flex flex-col overflow-hidden bg-[#d4d0c8] text-black text-[11px] leading-[14px] font-['DejaVu_Sans_Condensed','DejaVu_Sans',sans-serif]">
      {/* TITLE */}
      <header className="h-[18px] shrink-0 flex items-center pl-[3px] pr-[2px] bg-linear-to-r from-[#0a246a] to-[#a6caf0] text-white">
        <Compass dark />
        <h1 className="flex-1 font-bold whitespace-nowrap">КОМПАС-3D V8 Plus (ЗАЩИТА) - [ШКИС.735316.021 коля.m3d]</h1>
        <WindowButtons />
      </header>

      {/* MENU */}
      <nav className="h-6 shrink-0 flex items-center border-t border-t-white border-b border-b-[#808080] pl-[3px] pr-px">
        <VGrip />
        <span className="ml-[5px] mr-[2px]">
          <Glyph>
            <path d="M0 4l4-4h8l4 4v8l-4 4h-10l-2-2z" fill="#fff" stroke="#000" />
            <path d="M0 5.500h11v10M11 6l4-3M3 3h10M13.500 6v6" stroke="#000" />
            <path d="M3 8h6v5h-6z" fill="#808080" stroke="#000" />
          </Glyph>
        </span>
        <div className="flex-1 flex items-center pt-[2px]">
          {MENU.map(item => (
            <button key={item} className="px-[6px] h-5">
              <Accel text={item} />
            </button>
          ))}
        </div>
        <div className="self-end">
          <WindowButtons />
        </div>
      </nav>

      {/* TOOLBARS */}
      <div className="shrink-0 flex border-b-2 border-b-[#808080]">
        <div className={`${band} pl-[2px] pr-[5px]`}>
          <VGrip />
          <span className="w-[5px]" />
          <Bar items={STANDARD} />
        </div>
        <div className={`${band} pl-[2px] pr-1`}>
          <VGrip />
          <span className="w-[5px]" />
          <Bar items={LAYOUT} />
        </div>
        <div className={`${band} flex-1 min-w-0 pl-[2px]`}>
          <VGrip />
          <span className="w-1" />
          <Bar items={VIEW_A} />
          <div className="flex shrink-0 h-5 w-[66px] mx-px border border-[#808080]">
            <input
              aria-label="Масштаб"
              value={scale}
              onChange={e => setScale(e.target.value)}
              className="flex-1 min-w-0 bg-white pl-1 outline-none"
            />
            <button aria-label="Список масштабов" className="w-[15px] border-l border-[#808080] flex items-center justify-center">
              <DownArrow />
            </button>
          </div>
          <Bar items={VIEW_B} />
          <span className="flex-1" />
          <Chevrons />
        </div>
        <div className={`${band} w-10 pl-[2px] pr-px`}>
          <VGrip />
          <span className="flex-1" />
          <Chevrons />
        </div>
      </div>

      {/* WORK AREA */}
      <main className="flex-1 min-h-0 flex">
        <aside className="w-[26px] shrink-0">
          <div className={`${dock} pt-px`}>
            <HGrip />
            <div className="pt-[3px] flex flex-col">
              {PANELS.map((p, i) => (
                <div key={p.label} className="h-[17px] flex items-center gap-px">
                  <span className="w-[2px] h-[15px] bg-white border-r border-[#808080]" />
                  <button
                    aria-label={p.label}
                    title={p.label}
                    className={`size-[17px] flex items-center justify-center ${
                      i === PANELS.length - 1 ? 'border border-t-[#808080] border-l-[#808080] border-r-white border-b-white bg-[#e9e7e3]' : ''
                    }`}
                  >
                    <Glyph size="size-[14px]">{p.art}</Glyph>
                  </button>
                </div>
              ))}
            </div>
            <Column items={LEFT_TOOLS} />
          </div>
        </aside>

        <BuildTree />

        <div className="flex-1 min-w-0 bg-[#005490] border-l border-t border-l-[#404040] border-t-[#404040] border-r border-b border-r-white border-b-white">
          <ModelView />
        </div>

        <aside className="w-[27px] shrink-0 pl-px">
          <div className={`${dock} pt-[2px]`}>
            <HGrip />
            <span className="h-[3px]" />
            <Column items={GEOMETRY} />
          </div>
          <div className={`${dock} pt-[3px] pb-[3px]`}>
            <HGrip />
            <span className="h-[5px]" />
            <Column items={EDITING} />
          </div>
          <div className={`${dock} pt-[3px] pb-[3px]`}>
            <HGrip />
            <span className="h-[5px]" />
            <Column items={DIMENSIONS} />
          </div>
        </aside>
      </main>

      {/* PROPERTY PANEL */}
      <section className="shrink-0 ml-[26px] mr-[30px] pt-2 pb-[2px] pl-[2px] flex border-b border-b-[#808080]">
        <span className="w-[3px] border border-l-white border-t-white border-r-[#808080] border-b-[#808080]" />
        <div className="w-12 pl-[3px] flex flex-wrap content-start gap-x-[2px]">
          <button aria-label="Создать объект" className="size-5 pt-[3px] flex items-center justify-center">
            <Glyph>
              <path d="M1 8.500h13v-4M5.500 6v5M4.500 7v3M3.500 7v3M2.500 8v2" stroke="#000" />
            </Glyph>
          </button>
          <button aria-label="Прервать" className="size-5 pt-1 flex items-center justify-center">
            <svg viewBox="0 0 18 18" className="size-[18px]">
              <path d="M5 1h8l4 4v8l-4 4h-8l-4-4v-8z" fill="#f00" />
              <text x="9" y="11" textAnchor="middle" fontSize="6" fontWeight="bold" fill="#fff" fontFamily="Liberation Sans, sans-serif">STOP</text>
            </svg>
          </button>
          <button aria-label="Справка" className="size-5 mt-1 flex items-center justify-center">
            <svg viewBox="0 0 14 16" className="w-[14px] h-4" shapeRendering="crispEdges" fill="none">
              <path d="M.5.5h12v12h-1v2l-2-2h-9z" fill="#c8f0ff" stroke="#000040" />
              <path d="M4.500 5v-1l1-1h3v3l-2 1v2M6.500 10v2" stroke="#000080" strokeWidth="2" />
            </svg>
          </button>
        </div>
        <div className="flex-1 min-w-0">
          <div className="h-[35px] pl-[18px] flex items-start pt-[5px] border border-[#808080] border-b-black">
            <button aria-label="Выбрать грань" className="size-5 flex items-center justify-center border border-t-[#808080] border-l-[#808080] border-r-white border-b-white bg-[#e9e7e3]">
              <FaceIcon a="#f00020" b="#00d8ff" />
            </button>
            <label htmlFor="face" className="pt-1 whitespace-nowrap">
              <Accel text="Неподвижная &грань" />
            </label>
            <input
              id="face"
              value={face}
              onChange={e => setFace(e.target.value)}
              className="w-[94px] h-5 ml-px px-px bg-white border border-[#808080] outline-none"
            />
            <button aria-label="Выбрать сгибы" className="ml-[3px] size-5 flex items-center justify-center border border-[#808080]">
              <FaceIcon a="#00d8ff" b="#f00020" />
            </button>
            <span className="w-[82px] pl-px pt-1 whitespace-nowrap">
              <Accel text="Вы&бор сгибов" />
            </span>
            <button disabled className="w-[68px] h-6 flex items-center justify-center gap-2 border border-[#808080] text-[#808080] [text-shadow:1px_1px_#fff]">
              <span><Accel text="С&гибы" /></span>
              <span>&gt;&gt;</span>
            </button>
          </div>
          <button className="ml-[2px] h-[22px] px-[3px] flex items-center gap-px border-l border-l-white border-r-2 border-r-[#505050] border-b-2 border-b-[#505050] rounded-b-[3px]">
            <ParamIcon />
            Параметры
          </button>
        </div>
      </section>

      {/* STATUS */}
      <div className="h-5 shrink-0 flex gap-[2px] pt-[2px] pb-px pl-1 pr-px">
        <div className="flex-1 border border-t-[#808080] border-l-[#808080] border-r-white border-b-white" />
        <div className="w-[82px] border border-t-[#808080] border-l-[#808080] border-r-white border-b-white" />
      </div>

      <Taskbar />
    </div>
  );
}
